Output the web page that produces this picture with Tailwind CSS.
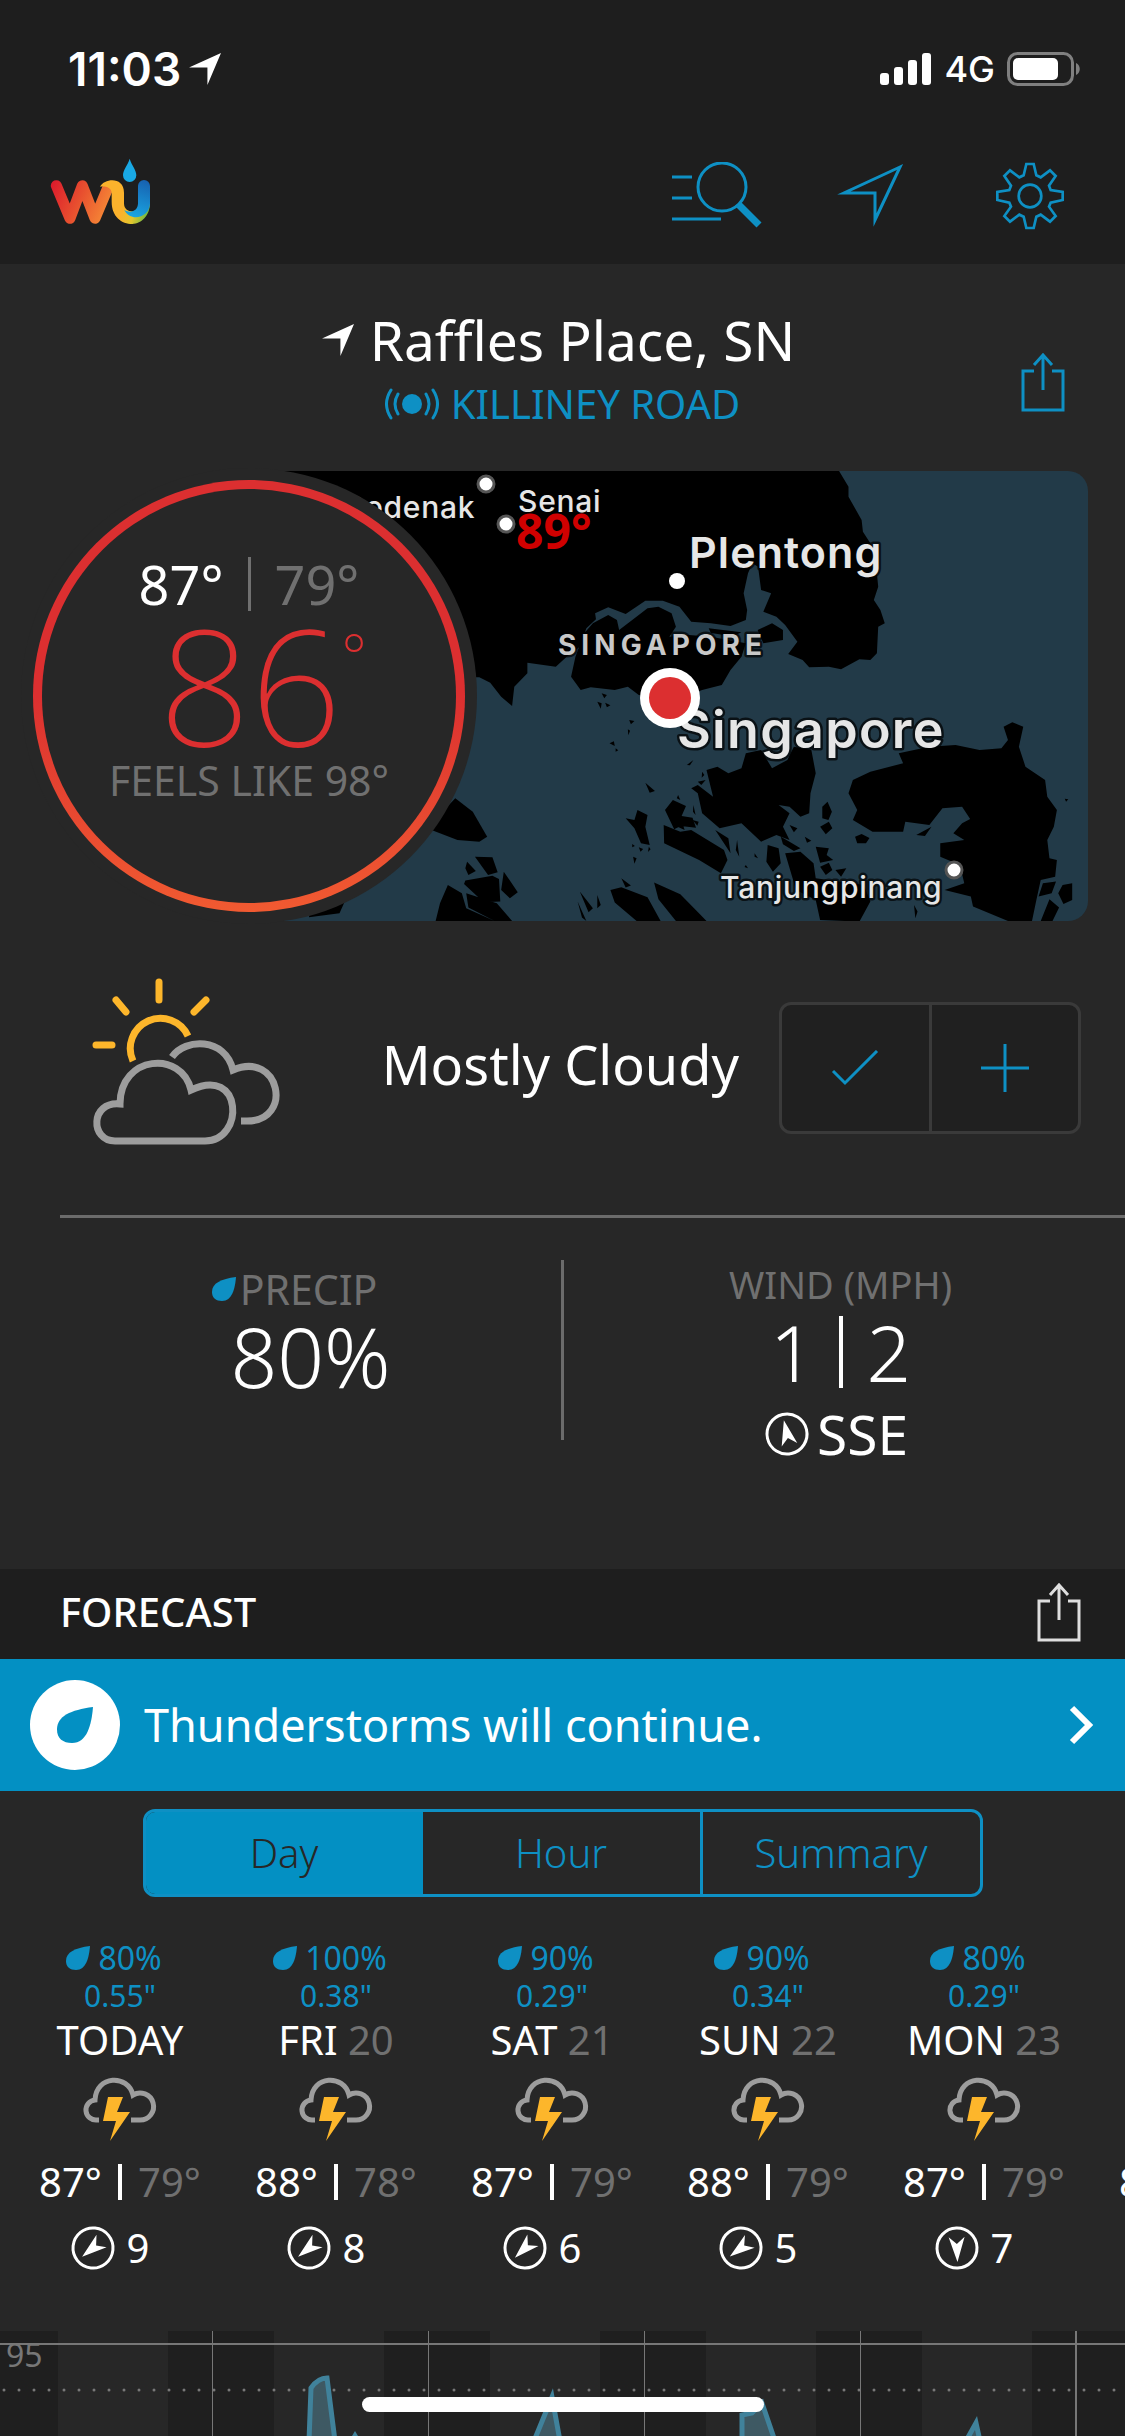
<!DOCTYPE html>
<html lang="en">
  <head>
    <meta charset="UTF-8" />
    <meta name="viewport" content="width=device-width, initial-scale=1.0" />
    <title>Weather</title>
    <script src="https://cdn.jsdelivr.net/npm/@tailwindcss/browser@4"></script>
  </head>
  <body class="h-screen overflow-hidden flex flex-col bg-[#272727] text-white font-['Noto_Sans','Open_Sans',sans-serif]">

    <!-- shared icons -->
    <svg class="hidden">
      <symbol id="drop" viewBox="0 0 24 24">
        <path fill="currentColor" d="M24 0C9 2 0 6 0 15c0 6 4 9 10 9C20 24 23 12 24 0Z" />
      </symbol>
      <symbol id="arrow" viewBox="0 0 33 33">
        <path fill="currentColor" d="M33 0 19 33V15H0Z" />
      </symbol>
      <symbol id="wind" viewBox="0 0 44 44">
        <circle cx="22" cy="22" r="20" fill="none" stroke="currentColor" stroke-width="3" />
        <path fill="currentColor" d="m22 8 8 25-8-7-8 7Z" />
      </symbol>
      <symbol id="share" viewBox="0 0 44 60">
        <path fill="none" stroke="currentColor" stroke-width="3" d="M13 19H2v39h40V19H31M22 38V3M13 13l9-10 9 10" />
      </symbol>
      <symbol id="storm" viewBox="0 0 76 66">
        <path fill="none" stroke="#9d9d9d" stroke-width="5" d="M17 43h-2A10 10 0 0 1 13 23C14-2 46-3 51 18A13.500 13.500 0 1 1 58 43H49" />
        <path fill="#fdb62b" d="M26 20h15l-6 15h13L28 64l6-20H21Z" />
      </symbol>
    </svg>

    <header class="h-[264px] shrink-0 bg-[#1e1e1e] font-['Inter',sans-serif]">
      <div class="flex items-center justify-between h-[138px] pl-[68px] pr-11">
        <div class="flex items-center gap-2 text-[46px] font-semibold">
          <span>11:03</span>
          <svg class="size-8"><use href="#arrow" /></svg>
        </div>
        <div class="flex items-center gap-3 text-[36px] font-medium">
          <svg class="w-[52px] h-8" viewBox="0 0 52 32" fill="currentColor">
            <rect y="20" width="9" height="12" rx="3" />
            <rect x="14" y="14" width="9" height="18" rx="3" />
            <rect x="28" y="7" width="9" height="25" rx="3" />
            <rect x="42" width="9" height="32" rx="3" />
          </svg>
          <span>4G</span>
          <svg class="w-[74px] h-[34px]" viewBox="0 0 74 34">
            <rect x="1.5" y="1.5" width="64" height="31" rx="9" fill="none" stroke="#808080" stroke-width="3" />
            <rect x="6" y="6" width="45" height="22" rx="5" fill="#fff" />
            <path fill="#808080" d="M69 11c5 2 5 10 0 12Z" />
          </svg>
        </div>
      </div>
      <nav class="flex items-center h-[116px] px-[45px]">
        <a href="#" aria-label="Home" class="mr-auto mb-2">
          <svg class="w-[120px] h-[84px]" viewBox="0 0 360 252" fill="none">
            <defs>
              <linearGradient id="w" gradientUnits="userSpaceOnUse" x1="20" y1="100" x2="195" y2="180">
                <stop offset="0" stop-color="#dc1b2c" />
                <stop offset=".5" stop-color="#e8502f" />
                <stop offset="1" stop-color="#f68a36" />
              </linearGradient>
              <linearGradient id="y" gradientUnits="userSpaceOnUse" x1="235" y1="170" x2="312" y2="195">
                <stop offset="0" stop-color="#fbb22c" />
                <stop offset=".45" stop-color="#e3c62d" />
                <stop offset="1" stop-color="#62b845" />
              </linearGradient>
              <linearGradient id="b" gradientUnits="userSpaceOnUse" x1="300" y1="90" x2="260" y2="205">
                <stop offset="0" stop-color="#1761b0" />
                <stop offset="1" stop-color="#19a9e5" />
              </linearGradient>
            </defs>
            <path stroke="url(#w)" stroke-width="33" stroke-linecap="round" stroke-linejoin="round" d="m34 107 41 98 37-98 38 98 37-88" />
            <path fill="url(#y)" d="M165 110C180 84 237 80 237 128V160C237 192 280 192 297 165L315 160C315 195 290 222 262 222 230 222 200 200 200 155V130C200 112 182 108 165 110Z" />
            <path fill="url(#b)" d="M279 108a18 18 0 0 1 36 0v52c0 43-58 58-77 20 20 12 41 2 41-20Z" />
            <path fill="#19a9e5" d="M254 26c6 20 20 34 20 50a20 20 0 0 1-40 0c0-16 14-30 20-50Z" />
          </svg>
        </a>
        <button aria-label="Search" class="mr-[72px] text-[#0e90c4]">
          <svg class="w-[93px] h-[68px]" viewBox="0 0 93 68" fill="none" stroke="currentColor" stroke-width="3">
            <path d="M1 15h20M1 36h20M1 57h49" />
            <circle cx="51" cy="25" r="24" />
            <path stroke-width="7" d="m68 43 20 20" />
          </svg>
        </button>
        <button aria-label="My location" class="mr-[92px] text-[#0e90c4]">
          <svg class="size-[68px]" viewBox="0 0 68 68" fill="none" stroke="currentColor" stroke-width="3" stroke-miterlimit="10">
            <path d="M64 5 8 31h31v27Z" />
          </svg>
        </button>
        <button aria-label="Settings" class="mr-4 text-[#0e90c4]">
          <svg class="size-[68px]" viewBox="-102 -102 204 204" fill="none" stroke="currentColor" stroke-width="8">
            <path d="M-11-96H11L19-62 32-56 60-77 77-60 57-31 62-18 98-12V12L62 20 57 32 77 60 60 77 32 56 19 62 11 96H-11L-19 62-32 56-60 77-77 60-57 32-62 20-98 12V-12L-62-18-57-31-77-60-60-77-32-56-19-62Z" />
            <circle r="34" />
          </svg>
        </button>
      </nav>
    </header>

    <main class="flex flex-col flex-1 min-h-0">
      <div class="grid grid-cols-[1fr_auto_1fr] items-center h-[207px] shrink-0 px-[60px]">
        <div class="col-start-2 flex flex-col items-center">
          <h1 class="flex items-center gap-4 text-[55px] leading-[72px] pr-2">
            <svg class="size-8"><use href="#arrow" /></svg>
            Raffles Place, SN
          </h1>
          <a href="#" class="flex items-center gap-3 text-[40px] leading-[56px] text-[#0e90c4]">
            <svg class="w-[54px] h-8" viewBox="0 0 54 32" fill="none" stroke="currentColor" stroke-width="3" stroke-linecap="round">
              <circle cx="27" cy="16" r="10" fill="currentColor" stroke="none" />
              <path d="M13 6q-6 10 0 20M6 2q-9 14 0 28M41 6q6 10 0 20M48 2q9 14 0 28" />
            </svg>
            KILLINEY ROAD
          </a>
        </div>
        <button aria-label="Share" class="justify-self-end mt-7 text-[#0e90c4]">
          <svg class="w-11 h-[60px]"><use href="#share" /></svg>
        </button>
      </div>

      <section class="relative h-[450px] shrink-0">
        <!-- map, land is black on sea -->
        <div class="h-full ml-[250px] mr-[37px] rounded-r-[20px] overflow-hidden bg-[#223a48]">
          <svg class="w-full h-full font-['Inter',sans-serif] font-medium" viewBox="250 471 838 450" preserveAspectRatio="xMaxYMid slice">
            <g transform="translate(440 460) scale(.4369 .3333)">
              <path d="M-700 30H912L935 80V110L965 180 968 215 985 250 1000 340 1003 380 993 420 1008 450 1018 490 1003 500 1000 580 985 600 960 598 918 628 890 620 845 622 830 600 797 582 818 545 790 495 770 470 740 455 758 400 735 390 728 320 715 310 705 340 695 400 703 450 700 480 665 498 620 490 575 485 548 440 510 422 470 422 425 462 385 442 355 460 357 478 335 505 320 560 290 590 265 620 200 608V640L170 680 165 738 140 710 115 668 90 652H-700Z" />
              <path d="M300 650 310 590 330 520 350 490 385 465 405 480 410 510 440 480 475 445 500 440 530 460 540 500 525 530 570 525 620 530 700 550 690 590 665 630 645 675 600 690 540 720 455 705 430 680 400 690 345 682 322 690Z" />
              <path d="m727 510 33-20 25 20v30l-45 10ZM615 505l75 12-20 12-50-10Z" />
              <path d="M610 930 635 920 660 940 690 925 700 880 735 870 760 925 795 900 810 860 850 870 860 940 848 1000 845 1060 825 1070 800 1040 775 1035 800 1060 785 1100 800 1140 770 1125 735 1145 690 1090 640 1105 600 1060 590 1000 575 985 590 975 625 1010Z" />
              <path d="M935 1000 945 960 985 935 1060 910 1050 880 1120 860 1180 855 1235 870 1285 865 1300 840 1290 800 1310 787 1335 800 1325 860 1340 920 1385 960 1390 1010 1412 1050 1405 1100 1390 1140 1395 1195 1412 1200 1408 1250 1375 1260 1365 1320 1355 1383H1300L1220 1340 1215 1310 1155 1290 1200 1270 1190 1215 1145 1190V1150L1200 1140 1175 1120 1195 1090 1245 1055 1215 1080 1195 1040 1150 1045 1120 1095 1065 1085 1060 1115H990L945 1080 955 1050Z" />
              <path d="M950 1130l15-8 18 12-8 16h-20ZM1370 1310l10-40 30-5-10 35ZM1375 1383l20-65 22 25-15 40ZM1425 1275l22-5v50l-20 12-12-32ZM1175 1220h60l-40 6ZM1090 1125l35-25-15 28ZM1085 1335l8 20-5 20Z" />
              <path d="M35 1015 75 1055 108 1130 90 1145 40 1140-30 1105Z" />
              <path d="m80 1190 40 2 12 45-22 8ZM62 1205l20 28-17 12-7-20ZM58 1262l62-15 15 10 3 68-38 2-45-55ZM146 1235l32 62-18 18-20-25ZM18 1275l32 25 10 45 65 38H-10L0 1330ZM60 1300l70 30 35 53h-40l-60-40ZM-297 1355l79-30-12 35-70 12Z" />
              <path d="M425 1075 445 1080 452 1050 475 1065 470 1100 480 1155 460 1150 445 1105ZM470 968l22 25-12 5ZM515 1050l18-30 30 18-10 30 25 5 8 30-35-5-15 10ZM512 1095l38 20 25-5 75 60 8 30-15 40-50-40-80-50ZM535 1095l15-25 10 40ZM390 1290l25-8 60 30 30 71h-55l-50-55ZM490 1268l60 35 45 60 15 20h-70l-40-65ZM415 1255l22 22-12 6ZM320 1295l30 50-10 12ZM360 1305l8 30-8 10ZM315 1325l20 58-10-10Z" />
              <path d="M630 1110l30 25 5 45-15-30ZM680 1140l5 50-8-20ZM750 1155l25 10 5 45-18 25-15-30ZM790 1180l35-5 30 35 5 45 110 20 15 50-25 60-90-5-10-60-45-30ZM860 1160l30 5-5 20 15 15-30 8ZM875 1040l12-15 10 30-8 25-14-5ZM870 1100l20-15 8 20-15 18ZM870 1220l20-12 8 22-15 15ZM800 1095l18 10-8 12ZM780 1130l20 15 25 20-15 8-25-20ZM835 1130l15 12-10 6ZM905 1230l25-5-12 25Z" />
              <path d="M370 700l12 5-6 10ZM360 725l10 5-2 16ZM378 728l12 8-8 6ZM433 780l12 3-8 10ZM430 808l5 4-4 14ZM388 850l10-6 2 14ZM402 865l6 6-6 4ZM565 915l15-15-8 16ZM545 1005l5 15-8-5ZM600 935l5 10-6 8ZM590 965l18-5-10 15ZM580 1035l5 30-6-10ZM442 1190l8 5-5 16ZM455 1162l10 5-6 8ZM478 1160l4 8-6 8ZM440 1152l6 6-6 4ZM578 1080l14 5-3 12ZM720 1180l8 15-8-5ZM700 1215l5 10-8-4ZM1430 1016l8 2-5 7Z" />
            </g>
            <g class="fill-[#e6e6e6] stroke-black/70 [paint-order:stroke]" stroke-width="5" stroke-linejoin="round">
              <text x="345" y="518" class="text-[30px] tracking-wide">Sedenak</text>
              <text x="518" y="512" class="text-[30px] tracking-wide">Senai</text>
              <text x="689" y="568" class="text-[43px] font-semibold tracking-wide">Plentong</text>
              <text x="558" y="655" class="text-[28px] font-bold tracking-[.18em] fill-[#c8c8c8]">SINGAPORE</text>
              <text x="677" y="748" class="text-[52px] font-semibold tracking-wide">Singapore</text>
              <text x="720" y="898" class="text-[30px] tracking-wide">Tanjungpinang</text>
            </g>
            <text x="516" y="549" class="font-['Open_Sans',sans-serif] text-[48px] font-bold fill-[#d00000]">89°</text>
            <g fill="#fff">
              <circle cx="677" cy="581" r="8" />
              <g stroke="#555" stroke-width="3">
                <circle cx="486" cy="484" r="8" />
                <circle cx="506" cy="524" r="8" />
                <circle cx="954" cy="870" r="8" />
              </g>
              <circle cx="670" cy="698" r="30" />
              <circle cx="670" cy="698" r="21" class="fill-[#dc2f30]" />
            </g>
          </svg>
        </div>
        <!-- current temperature -->
        <div class="absolute -top-[3px] left-[21px] size-[456px] rounded-full bg-[#272727] p-3">
          <div class="size-full rounded-full p-[9px] bg-linear-to-b from-[#dc2f30] from-50% to-[#f15a31]">
            <div class="size-full rounded-full bg-[#272727] flex flex-col items-center pt-[63px]">
              <div class="flex items-center gap-6 text-[54px] leading-[64px]">
                <span>87°</span>
                <span class="w-[3px] h-[54px] bg-[#707070]"></span>
                <span class="text-[#707070]">79°</span>
              </div>
              <div class="flex pl-7 text-[#dc2f30] font-extralight">
                <span class="text-[160px] leading-[136px]">86</span>
                <span class="text-[60px] leading-[80px]">°</span>
              </div>
              <div class="text-[41px] leading-[56px] text-[#707070]">FEELS LIKE 98°</div>
            </div>
          </div>
        </div>
      </section>

      <section class="flex items-center h-[294px] shrink-0 pl-[90px] pr-11">
        <svg class="w-[190px] h-[170px] mb-4" viewBox="0 0 190 170" fill="none" stroke-width="7">
          <g stroke="#fdb62b">
            <path d="M43 86A30 30 0 1 1 98 61" />
            <path stroke-linecap="round" d="M69 7v18M26 25l10 12M116 25l-12 12M6 70h16" />
          </g>
          <g stroke="#9d9d9d">
            <path d="M82 82C95 63 135 62 143 95 190 75 204 146 157 146H151" />
            <path d="M30 129C0 126 0 166 25 166H115C155 166 153 90 101 115 92 75 30 80 30 129Z" />
          </g>
        </svg>
        <h2 class="ml-auto mr-10 mb-2 text-[54px] leading-[72px]">Mostly Cloudy</h2>
        <div class="flex w-[302px] h-[132px] rounded-xl border-3 border-[#3a3a3a] bg-[#202020] text-[#0e90c4]">
          <button aria-label="Confirm" class="flex-1 flex items-center justify-center border-r-3 border-[#3a3a3a]">
            <svg class="w-12 h-9" viewBox="0 0 48 36" fill="none" stroke="currentColor" stroke-width="3"><path d="m2 21 12 12L46 1" /></svg>
          </button>
          <button aria-label="Add" class="flex-1 flex items-center justify-center">
            <svg class="size-12" viewBox="0 0 48 48" fill="none" stroke="currentColor" stroke-width="3"><path d="M24 0v48M0 24h48" /></svg>
          </button>
        </div>
      </section>

      <section class="ml-[60px] h-[354px] shrink-0 border-t-3 border-[#6b6b6b] flex pt-[42px]">
        <div class="w-[504px] h-[180px] pt-1 border-r-3 border-[#6b6b6b] flex flex-col items-center">
          <div class="flex items-center gap-1 pr-8 text-[41px] leading-[50px] text-[#707070]">
            <svg class="size-6 text-[#0e90c4]"><use href="#drop" /></svg>
            PRECIP
          </div>
          <div class="text-[82px] leading-[84px]">
            <span class="font-light">80%</span>
          </div>
        </div>
        <div class="flex-1 flex flex-col items-center pr-2">
          <div class="text-[38px] leading-[48px] text-[#707070]">WIND (MPH)</div>
          <div class="flex items-center gap-6 text-[78px] leading-[88px] font-light">
            <span>1</span>
            <span class="w-1 h-[72px] bg-white"></span>
            <span>2</span>
          </div>
          <div class="flex items-center gap-2 pr-2 text-[55px] leading-[76px]">
            <svg class="size-11 -rotate-13"><use href="#wind" /></svg>
            SSE
          </div>
        </div>
      </section>

      <div class="flex items-center justify-between h-[90px] shrink-0 bg-[#1e1e1e] pl-[60px] pr-11 pb-1">
        <h3 class="text-[40px] font-medium">FORECAST</h3>
        <button aria-label="Share forecast" class="text-[#dedede]">
          <svg class="w-11 h-[60px]"><use href="#share" /></svg>
        </button>
      </div>

      <a href="#" class="flex items-center gap-6 h-[132px] shrink-0 bg-[#0390c3] px-[30px] text-[45px]">
        <span class="size-[90px] rounded-full bg-white text-[#0390c3] flex items-center justify-center">
          <svg class="size-9"><use href="#drop" /></svg>
        </span>
        Thunderstorms will continue.
        <svg class="ml-auto w-[26px] h-10" viewBox="0 0 26 40" fill="none" stroke="currentColor" stroke-width="6"><path d="m3 3 17 17L3 37" /></svg>
      </a>

      <div class="flex h-[88px] shrink-0 w-[840px] max-w-full mx-auto mt-[18px] rounded-xl border-3 border-[#0e90c4] overflow-hidden text-[40px] font-light text-[#0e90c4]">
        <button class="flex-1 bg-[#0390c3] text-[#272727]">Day</button>
        <button class="flex-1">Hour</button>
        <button class="flex-1 border-l-3 border-[#0e90c4]">Summary</button>
      </div>

      <div id="days" class="flex shrink-0 h-[434px] pt-[42px] pl-3 overflow-x-auto [scrollbar-width:none]"></div>

      <!-- temperature chart, runs on below the screen -->
      <svg class="w-full flex-1 min-h-0" viewBox="0 0 1125 105" preserveAspectRatio="xMinYMin slice">
        <path fill="#1f1f1f" d="M0 0h58v105H0ZM168 0h106v105H168ZM384 0h106v105H384ZM600 0h106v105H600ZM816 0h106v105H816ZM1032 0h93v105h-93Z" />
        <path stroke="#777" d="M212.500 0v105M428.500 0v105M644.500 0v105M860.500 0v105" />
        <path stroke="#777" stroke-width="2" d="M0 13h1125M1076 0v105" />
        <path stroke="#777" stroke-width="3" stroke-linecap="round" stroke-dasharray="0 15" d="M4 59h1125" />
        <path fill="#3e5963" stroke="#40829b" stroke-width="5" d="M309 110 311 57Q318 47 327 47L335 110ZM534 110 552 66 560 110ZM742 110V84L752 82 762 72 775 110ZM966 110 976 92 980 110Z" />
        <path fill="#40829b" d="m352 105 3-5 3 5Z" />
        <text x="6" y="36" class="text-[32px] fill-[#777]">95</text>
      </svg>
    </main>

    <div class="fixed bottom-6 inset-x-0 mx-auto w-[402px] h-[15px] rounded-full bg-white"></div>
  </body>
  <script>
    const days = [
      { name: "TODAY", date: "", chance: "80%", rain: '0.55"', hi: 87, lo: 79, wind: 9, dir: 231 },
      { name: "FRI", date: "20", chance: "100%", rain: '0.38"', hi: 88, lo: 78, wind: 8, dir: 231 },
      { name: "SAT", date: "21", chance: "90%", rain: '0.29"', hi: 87, lo: 79, wind: 6, dir: 226 },
      { name: "SUN", date: "22", chance: "90%", rain: '0.34"', hi: 88, lo: 79, wind: 5, dir: 233 },
      { name: "MON", date: "23", chance: "80%", rain: '0.29"', hi: 87, lo: 79, wind: 7, dir: 178 },
      { name: "TUE", date: "24", chance: "80%", rain: '0.31"', hi: 88, lo: 79, wind: 6, dir: 178 },
    ];

    document.getElementById("days").innerHTML = days.map((d) => `
      <div class="w-[216px] shrink-0 flex flex-col items-center">
        <div class="flex items-center gap-2 text-[32px] leading-[38px] text-[#0e90c4] pr-3">
          <svg class="size-6"><use href="#drop" /></svg>${d.chance}
        </div>
        <div class="text-[30px] leading-[38px] text-[#0e90c4]">${d.rain}</div>
        <div class="text-[40px] leading-[50px]">${d.name} <span class="text-[#707070]">${d.date}</span></div>
        <svg class="w-[76px] h-[66px] mt-3"><use href="#storm" /></svg>
        <div class="flex items-center gap-4 mt-3 text-[40px] leading-[54px]">
          <span>${d.hi}°</span>
          <span class="w-1 h-9 bg-white"></span>
          <span class="text-[#707070]">${d.lo}°</span>
        </div>
        <div class="flex items-center gap-3 mt-3 pr-5 text-[40px] leading-[54px]">
          <svg class="size-11" style="rotate: ${d.dir}deg"><use href="#wind" /></svg>${d.wind}
        </div>
      </div>`).join("");
  </script>
</html>
